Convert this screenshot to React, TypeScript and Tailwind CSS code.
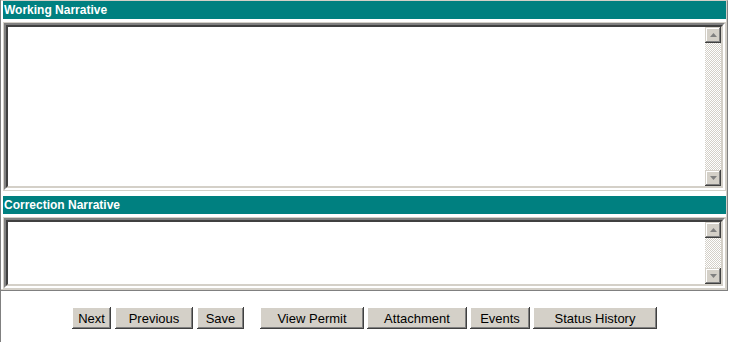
import React from "react";

function Arrow({ up }: { up?: boolean }) {
  return (
    <svg width="7" height="4" viewBox="0 0 7 4" className="block">
      {up ? (
        <polygon points="3.5,0 7,4 0,4" fill="#808080" />
      ) : (
        <polygon points="0,0 7,0 3.5,4" fill="#808080" />
      )}
    </svg>
  );
}

function ScrollButton({ up }: { up?: boolean }) {
  return (
    <div className="w-[16px] h-[16px] bg-[#d4d0c8] flex items-center justify-center shadow-[inset_-1px_-1px_#404040,inset_1px_1px_#d4d0c8,inset_-2px_-2px_#808080,inset_2px_2px_#fff]">
      <Arrow up={up} />
    </div>
  );
}

function NarrativeBox({ height }: { height: string }) {
  return (
    <div
      className={`${height} mx-[1px] flex bg-white border-2 border-t-[#808080] border-l-[#808080] border-b-[#fff] border-r-[#fff] outline outline-1 outline-[#d4d0c8]`}
    >
      <div className="flex-1 flex border-2 border-t-[#404040] border-l-[#404040] border-b-[#d4d0c8] border-r-[#d4d0c8]">
        <div className="flex-1 bg-white" />
        <div className="w-[16px] flex flex-col">
          <ScrollButton up />
          <div className="flex-1 bg-[repeating-conic-gradient(#d4d0c8_0_25%,#fff_0_50%)] bg-[length:2px_2px]" />
          <ScrollButton />
        </div>
      </div>
    </div>
  );
}

function Header({ title }: { title: string }) {
  return (
    <div className="h-[18px] bg-[#008080] text-white text-[12px] font-bold leading-[18px] pl-[1px]">
      {title}
    </div>
  );
}

const buttons = [
  { label: "Next", w: "w-[39px]", ml: "" },
  { label: "Previous", w: "w-[78px]", ml: "ml-[4px]" },
  { label: "Save", w: "w-[47px]", ml: "ml-[4px]" },
  { label: "View Permit", w: "w-[104px]", ml: "ml-[16px]" },
  { label: "Attachment", w: "w-[100px]", ml: "ml-[3px]" },
  { label: "Events", w: "w-[60px]", ml: "ml-[3px]" },
  { label: "Status History", w: "w-[124px]", ml: "ml-[3px]" },
];

export default function App() {
  return (
    <div className="w-[743px] h-[342px] bg-white border-l border-[#808080] font-['Liberation_Sans',Arial,sans-serif] overflow-hidden">
      {/* narrative table */}
      <div className="w-[727px] border-t border-t-[#d4d0c8] border-r border-r-[#808080] border-b border-b-[#808080] shadow-[inset_-1px_-1px_#d4d0c8] pl-[2px] pr-[1px] pb-[2px]">
        <Header title="Working Narrative" />
        <div className="mt-[4px]">
          <NarrativeBox height="h-[167px]" />
        </div>
        <div className="mt-[6px]">
          <Header title="Correction Narrative" />
        </div>
        <div className="mt-[4px]">
          <NarrativeBox height="h-[70px]" />
        </div>
      </div>

      {/* action buttons */}
      <div className="flex pl-[71px] mt-[16px]">
        {buttons.map((b) => (
          <button
            key={b.label}
            className={`${b.w} ${b.ml} h-[22px] bg-[#d4d0c8] text-[13px] text-black leading-none shadow-[inset_-1px_-1px_#404040,inset_1px_1px_#fff,inset_-2px_-2px_#808080,inset_2px_2px_#d4d0c8]`}
          >
            {b.label}
          </button>
        ))}
      </div>
    </div>
  );
}
